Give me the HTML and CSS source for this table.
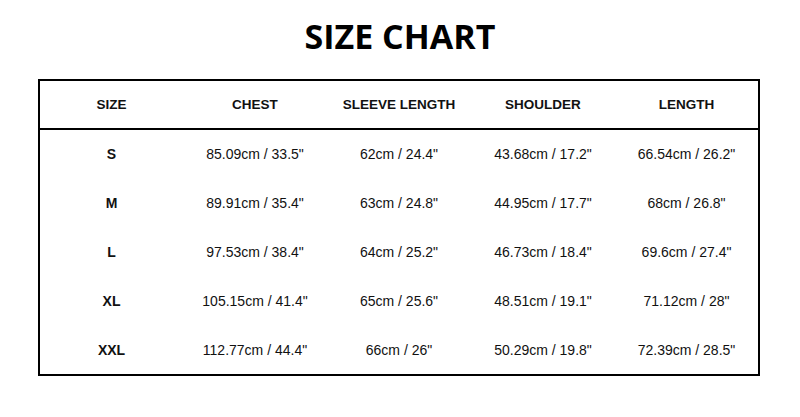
FILE: index.html
```html
<!DOCTYPE html>
<html>
<head>
<meta charset="utf-8">
<link rel="stylesheet" href="styles.css">
</head>
<body>
<h1 class="title">SIZE CHART</h1>
<table class="chart">
  <thead>
    <tr><th>SIZE</th><th>CHEST</th><th>SLEEVE LENGTH</th><th>SHOULDER</th><th>LENGTH</th></tr>
  </thead>
  <tbody>
    <tr><td class="size">S</td><td>85.09cm / 33.5"</td><td>62cm / 24.4"</td><td>43.68cm / 17.2"</td><td>66.54cm / 26.2"</td></tr>
    <tr><td class="size">M</td><td>89.91cm / 35.4"</td><td>63cm / 24.8"</td><td>44.95cm / 17.7"</td><td>68cm / 26.8"</td></tr>
    <tr><td class="size">L</td><td>97.53cm / 38.4"</td><td>64cm / 25.2"</td><td>46.73cm / 18.4"</td><td>69.6cm / 27.4"</td></tr>
    <tr><td class="size">XL</td><td>105.15cm / 41.4"</td><td>65cm / 25.6"</td><td>48.51cm / 19.1"</td><td>71.12cm / 28"</td></tr>
    <tr><td class="size">XXL</td><td>112.77cm / 44.4"</td><td>66cm / 26"</td><td>50.29cm / 19.8"</td><td>72.39cm / 28.5"</td></tr>
  </tbody>
</table>
</body>
</html>
```
FILE: styles.css
```css
html, body {
  margin: 0;
  padding: 0;
  background: #fff;
}
body {
  padding-top: 13px;
}
.title {
  margin: 0;
  height: 66px;
  text-align: center;
  font-family: "Open Sans", sans-serif;
  font-weight: 700;
  font-size: 34px;
  line-height: 46px;
  color: #000;
}
.chart {
  width: 722px;
  margin: 0 0 0 38px;
  border: 2.5px solid #000;
  border-collapse: collapse;
  table-layout: fixed;
  font-family: "Liberation Sans", Arial, sans-serif;
  color: #111;
}
.chart th {
  height: 47px;
  padding: 0;
  font-size: 13.5px;
  font-weight: 700;
  text-align: center;
  border-bottom: 2.5px solid #000;
}
.chart td {
  height: 48.8px;
  padding: 0;
  font-size: 14px;
  text-align: center;
}
.chart td.size {
  font-weight: 700;
}
```
